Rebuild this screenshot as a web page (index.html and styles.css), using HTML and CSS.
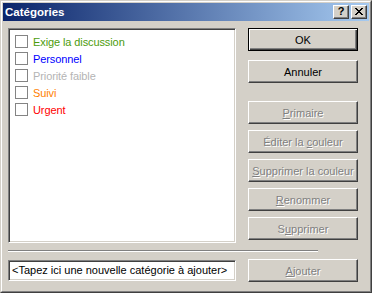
FILE: index.html
```html
<!DOCTYPE html>
<html lang="fr">
<head>
    <meta charset="UTF-8">
    <title>Catégories</title>
    <link rel="stylesheet" href="styles.css">
</head>
<body>
    <div class="window">
        <div class="frame">
            <div class="titlebar">
                <span class="title">Catégories</span>
                <div class="caption-btns">
                    <button class="cap-btn help-btn">?</button>
                    <button class="cap-btn close-btn">
                        <svg width="8" height="7" viewBox="0 0 8 7">
                            <path d="M0 0h2v1h-2zM6 0h2v1h-2zM1 1h2v1h-2zM5 1h2v1h-2zM2 2h4v1h-4zM3 3h2v1h-2zM2 4h4v1h-4zM1 5h2v1h-2zM5 5h2v1h-2zM0 6h2v1h-2zM6 6h2v1h-2z" fill="#000"/>
                        </svg>
                    </button>
                </div>
            </div>

            <div class="dialog-body">
                <div class="top-row">
                    <div class="listbox">
                        <div class="cat-row"><span class="check"></span><span class="cat green">Exige la discussion</span></div>
                        <div class="cat-row"><span class="check"></span><span class="cat blue">Personnel</span></div>
                        <div class="cat-row"><span class="check"></span><span class="cat grey">Priorité faible</span></div>
                        <div class="cat-row"><span class="check"></span><span class="cat orange">Suivi</span></div>
                        <div class="cat-row"><span class="check"></span><span class="cat red">Urgent</span></div>
                    </div>

                    <div class="btn-column">
                        <button class="btn default-btn">OK</button>
                        <button class="btn">Annuler</button>
                        <button class="btn disabled spaced"><u>P</u>rimaire</button>
                        <button class="btn disabled">Éditer la <u>c</u>ouleur</button>
                        <button class="btn disabled"><u>S</u>upprimer la couleur</button>
                        <button class="btn disabled"><u>R</u>enommer</button>
                        <button class="btn disabled">S<u>u</u>pprimer</button>
                    </div>
                </div>

                <div class="separator"></div>

                <div class="bottom-row">
                    <div class="new-cat">&lt;Tapez ici une nouvelle catégorie à ajouter&gt;</div>
                    <button class="btn disabled"><u>A</u>jouter</button>
                </div>
            </div>
        </div>
    </div>
</body>
</html>
```

FILE: styles.css
```css
* {
    margin: 0;
    padding: 0;
    box-sizing: border-box;
    font-family: 'Liberation Sans', Arial, sans-serif;
}

body {
    background-color: #d4d0c8;
    width: 372px;
    height: 293px;
    overflow: hidden;
}

/* Window frame */
.window {
    width: 372px;
    height: 293px;
    background-color: #d4d0c8;
    border: 1px solid;
    border-color: #d4d0c8 #404040 #404040 #d4d0c8;
}

.frame {
    height: 100%;
    border: 1px solid;
    border-color: #ffffff #808080 #808080 #ffffff;
    padding: 1px;
}

.titlebar {
    height: 18px;
    background: linear-gradient(to right, #0a246a, #a6caf0);
    display: flex;
    align-items: center;
    justify-content: space-between;
    padding: 0 2px 0 2px;
}

.title {
    color: white;
    font-weight: bold;
    font-size: 11.5px;
}

.caption-btns {
    display: flex;
    gap: 2px;
}

.cap-btn {
    width: 16px;
    height: 14px;
    background-color: #d4d0c8;
    border: 1px solid;
    border-color: #ffffff #404040 #404040 #ffffff;
    box-shadow: inset -1px -1px 0 #808080;
    display: flex;
    align-items: center;
    justify-content: center;
    font-size: 11px;
    font-weight: bold;
    line-height: 1;
    color: black;
}

.help-btn {
    padding-bottom: 1px;
}

.close-btn svg {
    display: block;
    margin-bottom: 1px;
}

/* Dialog content */
.dialog-body {
    padding: 7px 0 0 5px;
}

.top-row {
    display: flex;
    gap: 12px;
}

.listbox {
    width: 228px;
    height: 215px;
    background-color: white;
    border: 1px solid;
    border-color: #808080 #ffffff #ffffff #808080;
    box-shadow: inset 1px 1px 0 #404040, inset -1px -1px 0 #d4d0c8;
    padding: 4px 0 0 6px;
}

.cat-row {
    height: 17px;
    display: flex;
    align-items: center;
    gap: 5px;
}

.check {
    width: 13px;
    height: 13px;
    border: 1px solid #848484;
    background: white;
    flex-shrink: 0;
}

.cat {
    font-size: 11px;
    letter-spacing: -0.1px;
}

.green { color: #4c9c0c; }
.blue { color: #0000ff; }
.grey { color: #b4b4b4; }
.orange { color: #ff8000; }
.red { color: #ff0000; }

.btn-column {
    display: flex;
    flex-direction: column;
    gap: 6px;
}

.btn {
    width: 110px;
    height: 23px;
    background-color: #d4d0c8;
    border: 1px solid;
    border-color: #ffffff #404040 #404040 #ffffff;
    box-shadow: inset -1px -1px 0 #808080;
    font-size: 11px;
    color: black;
}

.btn-column .btn:nth-child(2) {
    margin-top: 3px;
}

.default-btn {
    border: 1px solid black;
    box-shadow: inset 1px 1px 0 #ffffff, inset -1px -1px 0 #404040, inset -2px -2px 0 #808080;
}

.btn.disabled {
    color: #808080;
    text-shadow: 1px 1px 0 #ffffff;
}

.btn.spaced {
    margin-top: 12px;
}

.separator {
    width: 310px;
    height: 2px;
    margin-top: 7px;
    border-top: 1px solid #808080;
    border-bottom: 1px solid #ffffff;
}

.bottom-row {
    display: flex;
    align-items: center;
    gap: 12px;
    margin-top: 7px;
}

.new-cat {
    width: 228px;
    height: 21px;
    background-color: white;
    border: 1px solid;
    border-color: #808080 #ffffff #ffffff #808080;
    box-shadow: inset 1px 1px 0 #404040, inset -1px -1px 0 #d4d0c8;
    font-size: 11px;
    padding: 3px 0 0 3px;
    white-space: nowrap;
    overflow: hidden;
}
```
